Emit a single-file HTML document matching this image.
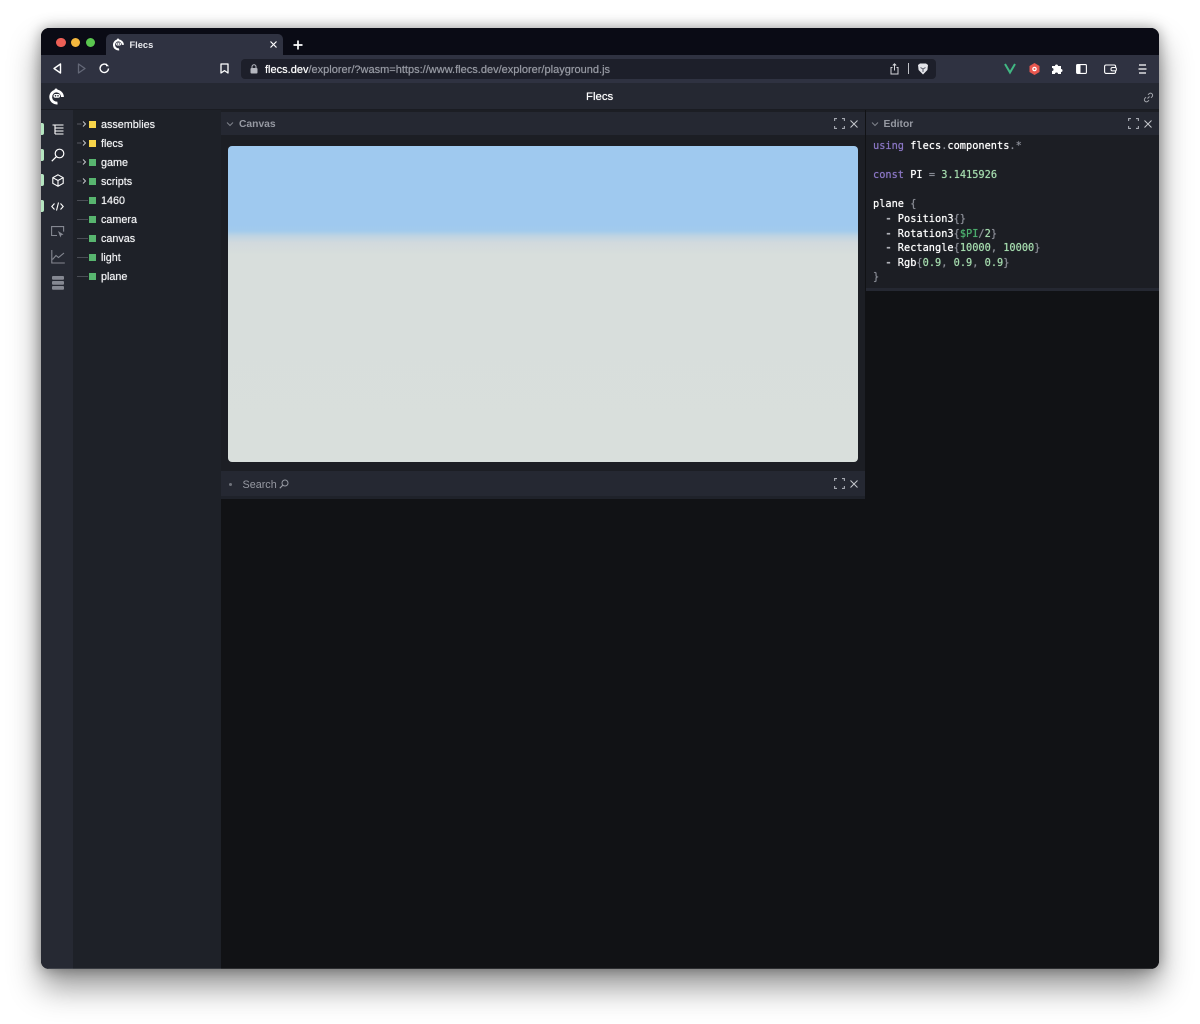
<!DOCTYPE html>
<html><head><meta charset="utf-8"><title>Flecs</title>
<style>
html,body{margin:0;padding:0;width:1200px;height:1024px;background:#fff;overflow:hidden;font-family:"Liberation Sans",sans-serif}
.a{position:absolute}
#win{position:absolute;left:41px;top:28px;width:1118px;height:941px;border-radius:8px;background:#111215;box-shadow:0 18px 32px rgba(0,0,0,.42),0 0 14px rgba(0,0,0,.35);overflow:hidden}
#abs{position:absolute;left:0;top:0;width:1200px;height:1024px;filter:blur(.3px)}
.t{position:absolute;white-space:nowrap;font-size:10.8px;line-height:14px;color:#fff;text-shadow:0 0 .6px currentColor}
.tree{left:101px;color:#f0f1f3}
.sq{position:absolute;left:89px;width:6.500px;height:6.500px}
.ln{position:absolute;left:77px;width:11px;height:1px;background:#4a4d55}
.code{position:absolute;left:873px;white-space:pre;font-family:"DejaVu Sans Mono",monospace;font-size:10.3px;line-height:14px;color:#fff;text-shadow:0 0 .6px currentColor}
.k{color:#8a76c4}.n{color:#a5dcae}.g{color:#8b8e97}.d{color:#4caf6e}.m{color:#b0b2b8;font-weight:bold}
svg{position:absolute;overflow:visible}
.h{position:absolute;color:#9699a2;font-weight:bold;font-size:10.3px;line-height:14px;white-space:nowrap}
</style></head><body>
<div id="win"></div>
<div id="abs">
<div class="a" style="left:41px;top:28px;width:1118px;height:941px;border-radius:8px;overflow:hidden">
  <div class="a" style="left:0;top:0;width:1118px;height:27px;background:#0a0b15"></div>
  <div class="a" style="left:65px;top:6px;width:177px;height:22px;background:#2f3241;border-radius:5px 5px 0 0"></div>
  <div class="a" style="left:0;top:27px;width:1118px;height:28px;background:#2f3241"></div>
  <div class="a" style="left:0;top:55px;width:1118px;height:26px;background:#252832"></div>
  <div class="a" style="left:0;top:81px;width:1118px;height:1px;background:#1a1c22"></div>
  <div class="a" style="left:0;top:82px;width:1118px;height:859px;background:#111215"></div>
  <div class="a" style="left:0;top:82px;width:32px;height:859px;background:#262933"></div>
  <div class="a" style="left:32px;top:82px;width:148px;height:859px;background:#1e2128"></div>
  <div class="a" style="left:180px;top:82px;width:644px;height:3px;background:#1c1e24"></div>
  <div class="a" style="left:180px;top:84px;width:644px;height:23px;background:#252832"></div>
  <div class="a" style="left:180px;top:107px;width:644px;height:336px;background:#1c1e24"></div>
  <div class="a" style="left:180px;top:443px;width:644px;height:2px;background:#252832"></div>
  <div class="a" style="left:180px;top:445px;width:644px;height:23px;background:#252832"></div>
  <div class="a" style="left:180px;top:468px;width:644px;height:3px;background:#1f222a"></div>
  <div class="a" style="left:825px;top:82px;width:293px;height:3px;background:#1c1e24"></div>
  <div class="a" style="left:825px;top:84px;width:293px;height:23px;background:#252832"></div>
  <div class="a" style="left:825px;top:107px;width:293px;height:153px;background:#1c1e24"></div>
  <div class="a" style="left:825px;top:260px;width:293px;height:3px;background:#252832"></div>
  <div class="a" style="left:0;bottom:0;width:1118px;height:1px;background:rgba(255,255,255,.12)"></div>
</div>

<!-- traffic lights -->
<div class="a" style="left:56px;top:37.800px;width:9.500px;height:9.500px;border-radius:50%;background:#ec5f56"></div>
<div class="a" style="left:70.700px;top:37.800px;width:9.500px;height:9.500px;border-radius:50%;background:#f4b73e"></div>
<div class="a" style="left:85.500px;top:37.800px;width:9.500px;height:9.500px;border-radius:50%;background:#5ac64f"></div>

<!-- tab -->
<svg style="left:112px;top:38px" width="12" height="13" viewBox="0 0 16 17" fill="none"><path d="M14.500 9A6.200 6.200 0 0 0 8 3A6 6 0 1 0 9.500 15" stroke="#fff" stroke-width="2.800"/><circle cx="8" cy="2" r="1.500" fill="#fff"/><rect x="5.500" y="6" width="6.500" height="3.800" rx="1.800" fill="#fff"/><circle cx="7.500" cy="7.800" r=".8" fill="#2f3241"/><circle cx="10" cy="7.800" r=".8" fill="#2f3241"/></svg>
<div class="t" style="left:129.500px;top:38px;font-size:9.300px;font-weight:bold;color:#e9eaee;text-shadow:none">Flecs</div>
<svg style="left:270px;top:41px" width="7" height="7" viewBox="0 0 7 7"><path d="M.5.5l6 6M6.500.5l-6 6" stroke="#fff" stroke-width="1.200"/></svg>
<svg style="left:293px;top:39.500px" width="10" height="10" viewBox="0 0 10 10"><path d="M5 .5v9M.5 5h9" stroke="#fff" stroke-width="1.700"/></svg>

<!-- nav -->
<svg style="left:53px;top:63px" width="9" height="11" viewBox="0 0 9 11" fill="none"><path d="M7.500 1L1 5.500l6.500 4.500z" stroke="#fff" stroke-width="1.400" stroke-linejoin="round"/></svg>
<svg style="left:77px;top:63px" width="9" height="11" viewBox="0 0 9 11" fill="none"><path d="M1.500 1L8 5.500 1.500 10z" stroke="#646877" stroke-width="1.300" stroke-linejoin="round"/></svg>
<svg style="left:99px;top:63px" width="11" height="11" viewBox="0 0 11 11" fill="none"><path d="M9.500 5.500A4.200 4.200 0 1 1 8 2.100" stroke="#fff" stroke-width="1.400"/><path d="M7 .2v3h3z" fill="#fff"/></svg>
<svg style="left:220px;top:63px" width="9" height="11" viewBox="0 0 9 11" fill="none"><path d="M1 1h7v9L4.500 7.600 1 10z" stroke="#fff" stroke-width="1.300" stroke-linejoin="round"/></svg>

<!-- url bar -->
<div class="a" style="left:241px;top:59px;width:695px;height:20px;background:#1d1f2a;border-radius:4px"></div>
<svg style="left:250px;top:64px" width="8" height="10" viewBox="0 0 8 10"><path d="M2 4V2.800a2 2 0 0 1 4 0V4" stroke="#b5b7bf" fill="none" stroke-width="1"/><rect x="0.500" y="4" width="7" height="5.500" rx="1" fill="#b5b7bf"/></svg>
<div class="t" style="left:265px;top:62.500px;font-size:11.020px;color:#9699a2"><span style="color:#fff">flecs.dev</span>/explorer/?wasm=https://www.flecs.dev/explorer/playground.js</div>
<svg style="left:890px;top:63px" width="9" height="12" viewBox="0 0 9 12" fill="none"><path d="M2.500 4.500H1v6.500h7V4.500H6.500M4.500 7.500V1M2.800 2.500L4.500.8l1.700 1.700" stroke="#d5d6da" stroke-width="1"/></svg>
<div class="a" style="left:908px;top:63px;width:1px;height:11px;background:#c0c2c8"></div>
<svg style="left:917px;top:63px" width="12" height="12" viewBox="0 0 12 12"><path d="M1 2l2-1.500h6L11 2l-.6 5L6 11.500 1.600 7z" fill="#e4e5ea"/><path d="M3.500 4.500L6 6l2.500-1.500M6 6v3" stroke="#555866" fill="none"/></svg>

<!-- extensions -->
<svg style="left:1004px;top:63px" width="12" height="11" viewBox="0 0 12 11" fill="none"><path d="M1 1l5 8.500L11 1" stroke="#41b883" stroke-width="2"/></svg>
<svg style="left:1029px;top:63px" width="11" height="12" viewBox="0 0 11 12"><path d="M5.500 0l5 3v6l-5 3-5-3V3z" fill="#e8574f"/><circle cx="5.500" cy="6" r="2.300" fill="#fff"/><circle cx="5.500" cy="6" r="1" fill="#e8574f"/></svg>
<svg style="left:1052px;top:63px" width="11" height="11" viewBox="0 0 11 11"><path d="M0 3h3a1.500 1.500 0 0 1 3 0h3v3a1.500 1.500 0 0 1 0 3v2H6a1.500 1.500 0 0 0-3 0H0V8a1.500 1.500 0 0 0 0-3z" fill="#fff"/></svg>
<svg style="left:1076px;top:64px" width="11" height="10" viewBox="0 0 11 10"><rect x=".6" y=".6" width="9.800" height="8.800" rx="1" fill="none" stroke="#fff" stroke-width="1.100"/><rect x="1" y="1" width="3.500" height="8" fill="#fff"/></svg>
<svg style="left:1104px;top:64px" width="13" height="10" viewBox="0 0 13 10" fill="none"><rect x=".6" y="1" width="11" height="8.400" rx="1.500" stroke="#fff" stroke-width="1.100"/><rect x="7" y="3.500" width="5.400" height="3.400" rx="1.500" fill="#2f3241" stroke="#fff"/></svg>
<svg style="left:1138px;top:64px" width="9" height="10" viewBox="0 0 9 10"><path d="M1 1h7M.5 5h8M1 9h7" stroke="#fff" stroke-width="1.300"/></svg>

<!-- app header -->
<svg style="left:48px;top:88px" width="16" height="17" viewBox="0 0 16 17" fill="none"><path d="M14.500 9A6.200 6.200 0 0 0 8 3A6 6 0 1 0 9.500 15" stroke="#fff" stroke-width="2.800"/><circle cx="8" cy="2" r="1.500" fill="#fff"/><rect x="5.500" y="6" width="6.500" height="3.800" rx="1.800" fill="#fff"/><circle cx="7.500" cy="7.800" r=".8" fill="#252832"/><circle cx="10" cy="7.800" r=".8" fill="#252832"/></svg>
<div class="t" style="left:586px;top:89.500px;font-size:11.400px;color:#fff">Flecs</div>
<svg style="left:1143px;top:92px" width="11" height="11" viewBox="0 0 11 11" fill="none"><path d="M4.500 6.500l2-2M5 2.800l1-1a2 2 0 0 1 3 3l-1 1M6 8.200l-1 1a2 2 0 0 1-3-3l1-1" stroke="#a5a7ae" stroke-width="1"/></svg>

<!-- sidebar tabs -->
<div class="a" style="left:41px;top:123px;width:3px;height:12px;background:#b5e5c0;border-radius:0 2px 2px 0"></div>
<div class="a" style="left:41px;top:149px;width:3px;height:12px;background:#b5e5c0;border-radius:0 2px 2px 0"></div>
<div class="a" style="left:41px;top:174px;width:3px;height:12px;background:#b5e5c0;border-radius:0 2px 2px 0"></div>
<div class="a" style="left:41px;top:200px;width:3px;height:12px;background:#b5e5c0;border-radius:0 2px 2px 0"></div>
<svg style="left:52px;top:124px" width="12" height="11" viewBox="0 0 12 11"><path d="M.5 1h11M3 4h8.500M3 7h8.500M3 10h8.500M3 1v9" stroke="#fff" stroke-width="1.100" fill="none"/></svg>
<svg style="left:51px;top:148px" width="14" height="14" viewBox="0 0 14 14" fill="none"><circle cx="8.500" cy="5.500" r="4.300" stroke="#fff" stroke-width="1.200"/><path d="M5.300 8.700L.8 13.200" stroke="#fff" stroke-width="1.300"/></svg>
<svg style="left:52px;top:174px" width="12" height="13" viewBox="0 0 12 13" fill="none"><path d="M6 .8l5.200 2.900v5.600L6 12.200.8 9.300V3.700zM.8 3.700L6 6.500l5.200-2.800M6 6.500v5.700" stroke="#fff" stroke-width="1.100"/></svg>
<svg style="left:51px;top:202px" width="13" height="9" viewBox="0 0 13 9" fill="none"><path d="M3.500 1.500L.8 4.500l2.700 3M9.500 1.500l2.700 3-2.700 3M7.500.5l-2 8" stroke="#fff" stroke-width="1.100"/></svg>
<svg style="left:51px;top:226px" width="14" height="13" viewBox="0 0 14 13" fill="none"><path d="M6 9.500H.6V.6h12v5" stroke="#858892" stroke-width="1.100"/><path d="M7 5l5.500 3.500-2.200.7-.9 2.300z" fill="#858892"/></svg>
<svg style="left:51px;top:250px" width="14" height="14" viewBox="0 0 14 14" fill="none"><path d="M.8 0v13h13M1.500 9.500L5 5.500l2.500 2L13 3" stroke="#858892" stroke-width="1.100"/></svg>
<svg style="left:52px;top:276px" width="12" height="14" viewBox="0 0 12 14"><rect width="12" height="3.800" rx="1" fill="#858892"/><rect y="5" width="12" height="3.800" rx="1" fill="#858892"/><rect y="10" width="12" height="3.800" rx="1" fill="#858892"/></svg>

<!-- tree -->
<svg style="left:77px;top:120px" width="10" height="8" viewBox="0 0 10 8" fill="none"><path d="M0 4h4.500" stroke="#55585f" stroke-width="1"/><path d="M6 1.500L8.500 4 6 6.500" stroke="#c5c7cc" stroke-width="1"/></svg>
<svg style="left:77px;top:139px" width="10" height="8" viewBox="0 0 10 8" fill="none"><path d="M0 4h4.500" stroke="#55585f" stroke-width="1"/><path d="M6 1.500L8.500 4 6 6.500" stroke="#c5c7cc" stroke-width="1"/></svg>
<svg style="left:77px;top:158px" width="10" height="8" viewBox="0 0 10 8" fill="none"><path d="M0 4h4.500" stroke="#55585f" stroke-width="1"/><path d="M6 1.500L8.500 4 6 6.500" stroke="#c5c7cc" stroke-width="1"/></svg>
<svg style="left:77px;top:177px" width="10" height="8" viewBox="0 0 10 8" fill="none"><path d="M0 4h4.500" stroke="#55585f" stroke-width="1"/><path d="M6 1.500L8.500 4 6 6.500" stroke="#c5c7cc" stroke-width="1"/></svg>
<div class="sq" style="top:121px;background:#f7d44a"></div><div class="t tree" style="top:117.500px">assemblies</div>
<div class="sq" style="top:140px;background:#f7d44a"></div><div class="t tree" style="top:136.500px">flecs</div>
<div class="sq" style="top:159px;background:#58b56f"></div><div class="t tree" style="top:155.500px">game</div>
<div class="sq" style="top:178px;background:#58b56f"></div><div class="t tree" style="top:174.500px">scripts</div>
<div class="ln" style="top:200px"></div><div class="sq" style="top:197px;background:#58b56f"></div><div class="t tree" style="top:193.500px">1460</div>
<div class="ln" style="top:219px"></div><div class="sq" style="top:216px;background:#58b56f"></div><div class="t tree" style="top:212.500px">camera</div>
<div class="ln" style="top:238px"></div><div class="sq" style="top:235px;background:#58b56f"></div><div class="t tree" style="top:231.500px">canvas</div>
<div class="ln" style="top:257px"></div><div class="sq" style="top:254px;background:#58b56f"></div><div class="t tree" style="top:250.500px">light</div>
<div class="ln" style="top:276px"></div><div class="sq" style="top:273px;background:#58b56f"></div><div class="t tree" style="top:269.500px">plane</div>

<!-- Canvas panel -->
<svg style="left:226px;top:121px" width="8" height="6" viewBox="0 0 8 6" fill="none"><path d="M1 1.500l3 3 3-3" stroke="#7f828b" stroke-width="1"/></svg>
<div class="h" style="left:239px;top:118px">Canvas</div>
<svg style="left:834px;top:118px" width="11" height="11" viewBox="0 0 11 11" fill="none"><path d="M.6 3V.6H3M8 .6h2.400V3M10.400 8v2.400H8M3 10.400H.6V8" stroke="#a5a8b0" stroke-width="1.100"/></svg>
<svg style="left:850px;top:120px" width="8" height="8" viewBox="0 0 8 8"><path d="M.5.5l7 7M7.500.5l-7 7" stroke="#c5c7cc" stroke-width="1"/></svg>
<div class="a" style="left:228px;top:146px;width:630px;height:316px;border-radius:4px;background:linear-gradient(#9fc9ef 0,#9fc9ef 79px,#a3cbec 85px,#bfd4e2 90px,#d2dadd 97px,#d8dedc 109px,#d9dfdc 100%)"></div>

<!-- Search panel -->
<div class="a" style="left:229px;top:483px;width:3px;height:3px;border-radius:50%;background:#6f727b"></div>
<div class="t" style="left:242.500px;top:477.500px;font-size:10.800px;color:#9699a2;text-shadow:none">Search</div>
<svg style="left:279px;top:479px" width="10" height="10" viewBox="0 0 10 10" fill="none"><circle cx="6" cy="4" r="3" stroke="#9699a2"/><path d="M3.800 6.200L.8 9.200" stroke="#9699a2" stroke-width="1.100"/></svg>
<svg style="left:834px;top:478px" width="11" height="11" viewBox="0 0 11 11" fill="none"><path d="M.6 3V.6H3M8 .6h2.400V3M10.400 8v2.400H8M3 10.400H.6V8" stroke="#a5a8b0" stroke-width="1.100"/></svg>
<svg style="left:850px;top:480px" width="8" height="8" viewBox="0 0 8 8"><path d="M.5.500l7 7M7.500.500l-7 7" stroke="#c5c7cc" stroke-width="1"/></svg>

<!-- Editor panel -->
<svg style="left:871px;top:121px" width="8" height="6" viewBox="0 0 8 6" fill="none"><path d="M1 1.500l3 3 3-3" stroke="#7f828b" stroke-width="1"/></svg>
<div class="h" style="left:883.500px;top:118px">Editor</div>
<svg style="left:1128px;top:118px" width="11" height="11" viewBox="0 0 11 11" fill="none"><path d="M.6 3V.6H3M8 .6h2.400V3M10.400 8v2.400H8M3 10.400H.6V8" stroke="#a5a8b0" stroke-width="1.100"/></svg>
<svg style="left:1144px;top:120px" width="8" height="8" viewBox="0 0 8 8"><path d="M.5.500l7 7M7.500.500l-7 7" stroke="#c5c7cc" stroke-width="1"/></svg>

<div class="code" style="top:139px"><span class="k">using</span> flecs<span class="g">.</span>components<span class="g">.*</span></div>
<div class="code" style="top:168px"><span class="k">const</span> PI <span class="g">=</span> <span class="n">3.1415926</span></div>
<div class="code" style="top:197px">plane <span class="g">{</span></div>
<div class="code" style="top:212px">  <span class="m">-</span> Position3<span class="g">{}</span></div>
<div class="code" style="top:227px">  <span class="m">-</span> Rotation3<span class="g">{</span><span class="d">$PI</span><span class="g">/</span><span class="n">2</span><span class="g">}</span></div>
<div class="code" style="top:241px">  <span class="m">-</span> Rectangle<span class="g">{</span><span class="n">10000</span><span class="g">,</span> <span class="n">10000</span><span class="g">}</span></div>
<div class="code" style="top:256px">  <span class="m">-</span> Rgb<span class="g">{</span><span class="n">0.9</span><span class="g">,</span> <span class="n">0.9</span><span class="g">,</span> <span class="n">0.9</span><span class="g">}</span></div>
<div class="code" style="top:270px"><span class="g">}</span></div>
</div>
</body></html>
